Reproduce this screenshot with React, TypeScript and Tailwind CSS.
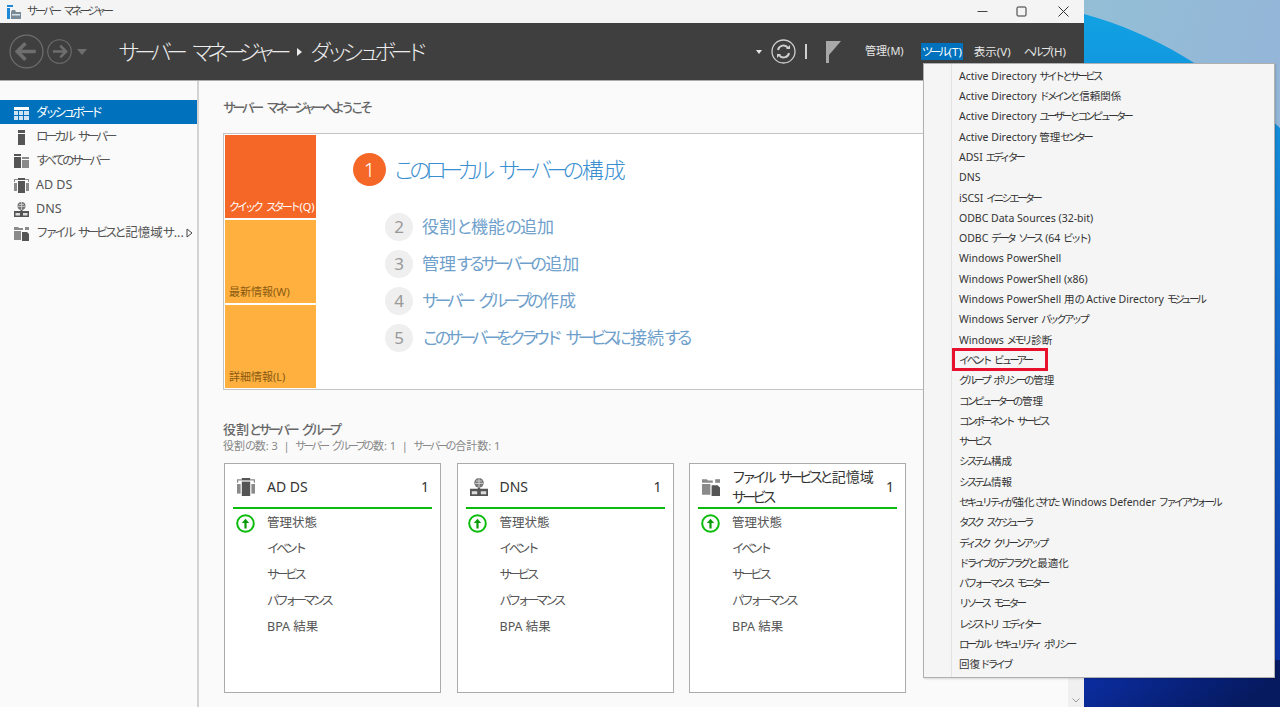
const tools = [
  "Active Directory サイトとサービス",
  "Active Directory ドメインと信頼関係",
  "Active Directory ユーザーとコンピューター",
  "Active Directory 管理センター",
  "ADSI エディター",
  "DNS",
  "iSCSI イニシエーター",
  "ODBC Data Sources (32-bit)",
  "ODBC データ ソース (64 ビット)",
  "Windows PowerShell",
  "Windows PowerShell (x86)",
  "Windows PowerShell 用の Active Directory モジュール",
  "Windows Server バックアップ",
  "Windows メモリ診断",
  "イベント ビューアー",
  "グループ ポリシーの管理",
  "コンピューターの管理",
  "コンポーネント サービス",
  "サービス",
  "システム構成",
  "システム情報",
  "セキュリティが強化された Windows Defender ファイアウォール",
  "タスク スケジューラ",
  "ディスク クリーンアップ",
  "ドライブのデフラグと最適化",
  "パフォーマンス モニター",
  "リソース モニター",
  "レジストリ エディター",
  "ローカル セキュリティ ポリシー",
  "回復ドライブ",
]

const steps = [
  { n: 2, label: "役割と機能の追加" },
  { n: 3, label: "管理するサーバーの追加" },
  { n: 4, label: "サーバー グループの作成" },
  { n: 5, label: "このサーバーをクラウド サービスに接続する" },
]

const rows = ["イベント", "サービス", "パフォーマンス", "BPA 結果"]

function Jp({ children }: { children: string }) {
  return (
    <>
      {children.split(/([\u3040-\u30ff]+)/).map((part, i) =>
        i % 2 === 1 ? (
          <span key={i} className="mr-[0.15em] tracking-[-0.27em]">{part}</span>
        ) : (
          <span key={i}>{part}</span>
        ),
      )}
    </>
  )
}

function DashboardIcon() {
  return (
    <svg width="15" height="13" viewBox="0 0 15 13">
      <rect width="15" height="3" fill="#fff" />
      <path d="M0 4h4v4H0zM5 4h4v4H5zM10 4h5v4h-5zM0 9h4v4H0zM5 9h4v4H5zM10 9h5v4h-5z" fill="#cfe3f2" />
    </svg>
  )
}

function LocalIcon() {
  return (
    <svg width="15" height="15" viewBox="0 0 15 15">
      <rect x="4" y="0" width="7" height="3" fill="#555" />
      <rect x="4" y="4" width="7" height="11" fill="#555" />
    </svg>
  )
}

function AllServersIcon() {
  return (
    <svg width="15" height="14" viewBox="0 0 15 14">
      <path d="M0 0h7v2H0zM0 3h7v11H0z" fill="#555" />
      <path d="M8 3h7v2H8zM8 6h7v8H8z" fill="#8a8a8a" />
    </svg>
  )
}

function AdIcon({ size = 15 }: { size?: number }) {
  return (
    <svg width={size} height={size} viewBox="0 0 15 15">
      <path d="M0 1h4v1H1v2H0zM11 1h4v3h-1V2h-3z" fill="#8a8a8a" />
      <rect x="0" y="5" width="3" height="8" fill="#8a8a8a" />
      <rect x="12" y="5" width="3" height="8" fill="#8a8a8a" />
      <rect x="4" y="0" width="7" height="2" fill="#555" />
      <rect x="4" y="3" width="7" height="12" fill="#555" />
    </svg>
  )
}

function DnsIcon({ size = 15 }: { size?: number }) {
  return (
    <svg width={size} height={size} viewBox="0 0 15 15">
      <circle cx="7.5" cy="4" r="4" fill="#777" />
      <path d="M5 2.5h5M4 4.5h7M7.5 0v8" stroke="#ddd" strokeWidth="0.7" />
      <path d="M0 9h6.5v-1h2v1H15v6H0z" fill="#555" />
      <path d="M1.5 11h4.5v2.5H1.5zM9 11h4.500v2.500H9z" fill="#ddd" />
    </svg>
  )
}

function FileIcon({ size = 15 }: { size?: number }) {
  return (
    <svg width={size} height={size} viewBox="0 0 15 15">
      <path d="M0 1h4l1 1h4v2H0zM0 5h7v9H0z" fill="#8a8a8a" />
      <path d="M11 1h4v3h-4z" fill="#8a8a8a" />
      <path d="M8 6h5l2 2v7H8z" fill="#555" />
    </svg>
  )
}

function Arrow({ size, dir }: { size: number; dir: "left" | "right" }) {
  const d = dir === "left" ? "M26 17H9M16 9l-8 8 8 8" : "M8 17h17M18 9l8 8-8 8"
  return (
    <svg width={size} height={size} viewBox="0 0 34 34" fill="none" stroke="#6e6e6e">
      <circle cx="17" cy="17" r="16" strokeWidth={size > 30 ? 1.2 : 1.500} />
      <path d={d} strokeWidth="3.500" />
    </svg>
  )
}

function StatusUp() {
  return (
    <svg width="19" height="19" viewBox="0 0 19 19" fill="none">
      <circle cx="9.500" cy="9.500" r="8.300" stroke="#0cbc0c" strokeWidth="2" />
      <path d="M9.500 14.500V8" stroke="#0a9a0a" strokeWidth="2.200" />
      <path d="M5.800 9l3.700-4.200L13.200 9z" fill="#0a9a0a" />
    </svg>
  )
}

function NavItem({ icon, label, active, chevron }: { icon: React.ReactNode; label: string; active?: boolean; chevron?: boolean }) {
  return (
    <div className={`flex h-6 items-center whitespace-nowrap pl-[14px] pt-[2px] text-[12.500px] ${active ? "bg-[#0072bd] text-white" : "text-[#555]"}`}>
      <span className="flex w-[22px] shrink-0 items-center">{icon}</span>
      <span><Jp>{label}</Jp></span>
      {chevron && (
        <svg className="ml-auto mr-[4px] shrink-0" width="7" height="10" viewBox="0 0 7 10" fill="none">
          <path d="M1 1l5 4-5 4z" stroke="#444" />
        </svg>
      )}
    </div>
  )
}

function Tile({ label, color, text }: { label: string; color: string; text: string }) {
  return (
    <div className={`flex h-[83px] items-end whitespace-nowrap px-1 pb-[3px] text-[11px] ${color} ${text}`}>
      <span><Jp>{label}</Jp></span>
    </div>
  )
}

function RoleCard({ icon, title, count }: { icon: React.ReactNode; title: string[]; count: number }) {
  return (
    <div className="h-[230px] w-[217px] shrink-0 border border-[#ababab] bg-white px-2">
      <div className="flex h-[43px] items-center pl-1 pt-[2px] text-[#333]">
        <span className="flex w-[30px] shrink-0">{icon}</span>
        <span className="whitespace-nowrap text-[14px] leading-[20px]">
          {title.map((line) => (
            <span key={line} className="block"><Jp>{line}</Jp></span>
          ))}
        </span>
        <span className="ml-auto pr-[3px] text-[14px]">{count}</span>
      </div>
      <div className="h-[2px] bg-[#0cbc0c]" />
      <div className="mt-[1px] flex h-[26px] items-center text-[12.500px] text-[#555]">
        <span className="flex w-[34px] shrink-0 justify-center pr-[10px]">
          <StatusUp />
        </span>
        管理状態
      </div>
      {rows.map((r) => (
        <div key={r} className="flex h-[26px] items-center pl-[34px] text-[12.500px] text-[#555]">
          <span><Jp>{r}</Jp></span>
        </div>
      ))}
    </div>
  )
}

export default function App() {
  return (
    <div className="relative h-[707px] w-[1280px] overflow-hidden bg-[#0a2fa0] font-['Noto_Sans','Noto_Sans_CJK_JP',sans-serif]">
      {/* wallpaper */}
      <svg className="absolute left-0 top-0" width="1280" height="707" viewBox="0 0 1280 707">
        <defs>
          <linearGradient id="sky" x1="0" y1="0" x2="1" y2="0.200">
            <stop offset="0" stopColor="#93bfd6" />
            <stop offset="1" stopColor="#94b6d8" />
          </linearGradient>
          <linearGradient id="deep" x1="0" y1="0" x2="0" y2="1">
            <stop offset="0" stopColor="#11a4e4" />
            <stop offset="0.500" stopColor="#1465c8" />
            <stop offset="1" stopColor="#0a2a9c" />
          </linearGradient>
          <linearGradient id="floor" x1="0" y1="0" x2="1" y2="0.300">
            <stop offset="0" stopColor="#0b2fa8" />
            <stop offset="1" stopColor="#061a60" />
          </linearGradient>
        </defs>
        <rect x="1084" width="196" height="707" fill="url(#deep)" />
        <path d="M1084 0h196v128C1220 75 1160 35 1084 14z" fill="url(#sky)" />
        <rect x="1084" y="660" width="196" height="47" fill="url(#floor)" />
      </svg>

      {/* server manager window */}
      <div className="relative flex h-[707px] w-[1084px] flex-col bg-[#fafafa]">
        <div className="flex h-[23px] shrink-0 items-center bg-[#f4f4f4] pl-[7px] text-[11px] text-[#444]">
          <svg width="14" height="14" viewBox="0 0 14 14">
            <path d="M0 0h6v2H0zM0 3h3v11H0z" fill="#1e88d8" />
            <path d="M4 7l1-2h3l1 2h5v7H4z" fill="#7a8a96" />
            <rect x="5" y="9" width="8" height="1.500" fill="#d7e3ea" />
          </svg>
          <span className="ml-[6px]"><Jp>サーバー マネージャー</Jp></span>
          <div className="ml-auto flex items-center text-[#333]">
            <svg width="11" height="11" viewBox="0 0 11 11" stroke="#444" fill="none">
              <path d="M0.500 5.500h10" />
            </svg>
            <svg className="ml-[28px]" width="11" height="11" viewBox="0 0 11 11" stroke="#333" fill="none">
              <rect x="1" y="1" width="9" height="9" rx="1" />
            </svg>
            <svg className="ml-[31px] mr-[15px]" width="11" height="11" viewBox="0 0 11 11" stroke="#333" fill="none">
              <path d="M0.500 0.500l10 10M10.500 0.500l-10 10" />
            </svg>
          </div>
        </div>

        <div className="flex h-[58px] shrink-0 items-center border-b border-[#ababab] bg-[#3f3f3f] pl-[9px]">
          <Arrow size={35} dir="left" />
          <span className="ml-[3px]">
            <Arrow size={25} dir="right" />
          </span>
          <svg className="ml-[5px]" width="10" height="6" viewBox="0 0 10 6">
            <path d="M0 0h10L5 6z" fill="#6e6e6e" />
          </svg>
          <div className="ml-[31px] flex items-center text-[22px] font-light text-[#ececec]">
            <span><Jp>サーバー マネージャー</Jp></span>
            <svg className="mx-[8px]" width="5" height="8" viewBox="0 0 5 8">
              <path d="M0 0l5 4-5 4z" fill="#ececec" />
            </svg>
            <span><Jp>ダッシュボード</Jp></span>
          </div>
          <div className="ml-auto flex items-center text-[11.500px] text-[#e6e6e6]">
            <svg width="6" height="4" viewBox="0 0 6 4">
              <path d="M0 0h6L3 4z" fill="#e6e6e6" />
            </svg>
            <svg className="ml-[9px]" width="25" height="25" viewBox="0 0 25 25" fill="none" stroke="#cfcfcf">
              <circle cx="12.500" cy="12.500" r="11.500" strokeWidth="1.300" />
              <path d="M7 11a5.500 5.500 0 0 1 10-2M18 14a5.500 5.500 0 0 1-10 2" strokeWidth="2" />
              <path d="M15 10h4V6zM10 15H6v4z" fill="#cfcfcf" stroke="none" />
            </svg>
            <span className="ml-[9px] h-[15px] w-[2px] bg-[#cfcfcf]" />
            <svg className="ml-[19px]" width="15" height="22" viewBox="0 0 15 22">
              <path d="M0 0h3v22H0z" fill="#a8a8a8" />
              <path d="M3 0h12l-12 14z" fill="#a8a8a8" />
            </svg>
            <span className="ml-[24px] text-[11px]">管理(M)</span>
            <span className="ml-[17px] flex h-[17px] items-center bg-[#0072bd] px-[1px] text-white"><span><Jp>ツール(T)</Jp></span></span>
            <span className="ml-[11px]">表示(V)</span>
            <span className="ml-[13px] mr-[18px]"><Jp>ヘルプ(H)</Jp></span>
          </div>
        </div>

        <div className="flex min-h-0 flex-1">
          <aside className="w-[199px] shrink-0 border-r-[2px] border-[#d3d3d3] bg-[#fafafa] pt-[19px]">
            <NavItem active icon={<DashboardIcon />} label="ダッシュボード" />
            <NavItem icon={<LocalIcon />} label="ローカル サーバー" />
            <NavItem icon={<AllServersIcon />} label="すべてのサーバー" />
            <NavItem icon={<AdIcon />} label="AD DS" />
            <NavItem icon={<DnsIcon />} label="DNS" />
            <NavItem icon={<FileIcon />} label="ファイル サービスと記憶域サ..." chevron />
          </aside>

          <main className="min-w-0 flex-1 pl-[24px]">
            <h2 className="mt-[17px] text-[13px] font-medium leading-[18px] text-[#666]">
              <Jp>サーバー マネージャーへようこそ</Jp>
            </h2>
            <div className="mt-[17px] flex h-[257px] w-[760px] border-[1.500px] border-[#c4c4c4] bg-white">
              <div className="flex w-[92px] shrink-0 flex-col gap-[2px] pl-[1px] pt-[1px]">
                <Tile label="クイック スタート(Q)" color="bg-[#f56726]" text="text-white" />
                <Tile label="最新情報(W)" color="bg-[#ffb03f]" text="text-[#8a5a10]" />
                <Tile label="詳細情報(L)" color="bg-[#ffb03f]" text="text-[#8a5a10]" />
              </div>
              <div className="pl-[37px] pt-[19px]">
                <div className="flex items-center">
                  <span className="flex h-[33px] w-[33px] items-center justify-center rounded-full bg-[#f56726] text-[20px] font-light text-white">1</span>
                  <span className="ml-[7px] text-[22px] font-light text-[#3a8fd0]"><Jp>このローカル サーバーの構成</Jp></span>
                </div>
                <div className="mt-[27px] flex flex-col gap-[9px] pl-[32px]">
                  {steps.map((s) => (
                    <div key={s.n} className="flex h-[28px] items-center">
                      <span className="flex h-[28px] w-[28px] items-center justify-center rounded-full bg-[#efefef] text-[17px] text-[#999]">{s.n}</span>
                      <span className="ml-[9px] text-[17px] text-[#6f9fcb]"><Jp>{s.label}</Jp></span>
                    </div>
                  ))}
                </div>
              </div>
            </div>

            <h3 className="mt-[31px] text-[13px] font-medium leading-[16px] text-[#666]"><Jp>役割とサーバー グループ</Jp></h3>
            <p className="mt-[2px] whitespace-pre text-[11px] leading-[14px] text-[#888]">
              <Jp>{"役割の数: 3  |  サーバー グループの数: 1  |  サーバーの合計数: 1"}</Jp>
            </p>
            <div className="mt-[10px] flex gap-[15.500px] pl-[1px]">
              <RoleCard icon={<AdIcon size={18} />} title={["AD DS"]} count={1} />
              <RoleCard icon={<DnsIcon size={18} />} title={["DNS"]} count={1} />
              <RoleCard icon={<FileIcon size={18} />} title={["ファイル サービスと記憶域", "サービス"]} count={1} />
            </div>
          </main>

          <div className="flex w-[16px] shrink-0 flex-col justify-end bg-[#f0f0f0] pb-[4px]">
            <svg className="mx-auto" width="8" height="5" viewBox="0 0 8 5" fill="none" stroke="#999">
              <path d="M0.500 0.500L4 4l3.500-3.500" />
            </svg>
          </div>
        </div>
      </div>

      {/* tools dropdown */}
      <div className="absolute left-[923px] top-[63px] h-[615px] w-[352px] border border-[#b0b0b0] bg-[#f5f5f5] pt-[2.500px] shadow-[1px_1px_2px_rgba(0,0,0,0.15)]">
        <div className="absolute bottom-0 left-[27px] top-0 w-px bg-[#e2e2e2]" />
        {tools.map((t) => (
          <div key={t} className="flex h-[20.310px] items-center pl-[35px] text-[10.500px] text-[#333]">
            <span><Jp>{t}</Jp></span>
          </div>
        ))}
      </div>
      <div className="absolute left-[952px] top-[348px] h-[23px] w-[96px] border-[3px] border-[#e8112d]" />
    </div>
  )
}
